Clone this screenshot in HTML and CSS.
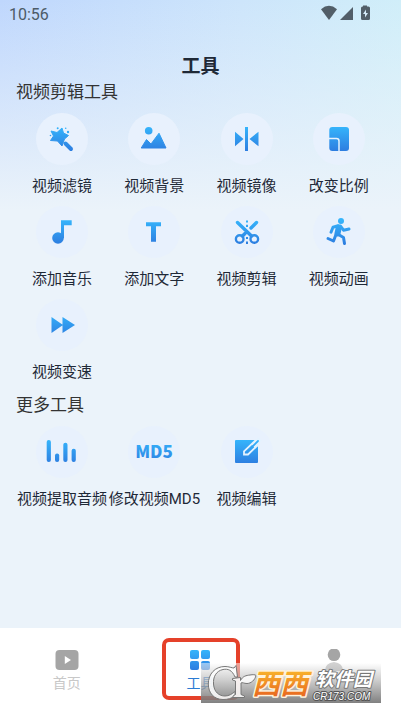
FILE: index.html
```html
<!DOCTYPE html>
<html lang="zh-CN">
<head>
<meta charset="utf-8">
<meta name="viewport" content="width=device-width, initial-scale=1">
<title>工具</title>
<link rel="stylesheet" href="styles.css">
</head>
<body>
<svg class="defs" aria-hidden="true">
  <defs>
    <linearGradient id="blue" gradientUnits="userSpaceOnUse" x1="0" y1="14" x2="0" y2="38">
      <stop offset="0" stop-color="#35b4fb"/><stop offset="1" stop-color="#2d7de0"/>
    </linearGradient>
    <linearGradient id="tab" gradientUnits="userSpaceOnUse" x1="0" y1="0" x2="0" y2="20">
      <stop offset="0" stop-color="#35b4fb"/><stop offset="1" stop-color="#2d7de0"/>
    </linearGradient>
    <linearGradient id="orange" x1="0" y1="0" x2="0" y2="1">
      <stop offset="0.2" stop-color="#f9b52c"/><stop offset="1" stop-color="#e4571c"/>
    </linearGradient>
  </defs>
</svg>

<header class="status">
  <time>10:56</time>
  <svg class="signals" viewBox="0 0 50 16" aria-hidden="true">
    <path d="M1 4.200Q9-2.600 17 4.200L9 15Z"/>
    <path d="M33 2V15H20Z"/>
    <path d="M43 1.500V.5H47V1.500H48.500Q50 1.500 50 3V13.500Q50 15 48.500 15H42.500Q41 15 41 13.500V3Q41 1.500 42.500 1.500Z"/>
    <path class="bolt" d="M46 4.500L43 9H45V12.500L48 8H46Z"/>
  </svg>
</header>

<main>
  <h1>工具</h1>
  <section>
    <h2>视频剪辑工具</h2>
    <div class="grid">
      <button class="tool"><svg viewBox="0 0 52 52" aria-hidden="true">
        <path class="round" stroke-width="1" d="M26 15L27.500 20L32.500 22.500L28.500 26L26 33L21.500 28L14.500 27.500L17.500 23L15 18L21 19.500Z"/>
        <path class="line" stroke-width="4" d="M29.500 30.500L35 36"/>
        <circle cx="21.700" cy="15.300" r="1"/><circle cx="32" cy="19" r="1.200"/><circle cx="29.700" cy="15.300" r=".8"/><circle cx="14.500" cy="22.500" r=".8"/>
      </svg><span>视频滤镜</span></button>
      <button class="tool"><svg viewBox="0 0 52 52" aria-hidden="true">
        <circle cx="20.700" cy="17.700" r="3.800"/>
        <path class="round" stroke-width="1" d="M13.200 35L18.500 26.500L23 31L31 20.200L38 35Z"/>
      </svg><span>视频背景</span></button>
      <button class="tool"><svg viewBox="0 0 52 52" aria-hidden="true">
        <path d="M24 14H27V38H24ZM14 18.700L22.500 26L14 33.300ZM37.500 18.700L28.500 26L37.500 33.300Z"/>
      </svg><span>视频镜像</span></button>
      <button class="tool"><svg viewBox="0 0 52 52" aria-hidden="true">
        <rect x="16.300" y="14" width="19.700" height="24" rx="3"/>
        <path class="cut" stroke-width="1.500" d="M16 25.500H23.500Q26 25.500 26 28V38"/>
      </svg><span>改变比例</span></button>
      <button class="tool"><svg viewBox="0 0 52 52" aria-hidden="true">
        <circle cx="22" cy="32" r="5.800"/><path d="M25 14.300H35.700V19.300H28V32H25Z"/>
      </svg><span>添加音乐</span></button>
      <button class="tool"><svg viewBox="0 0 52 52" aria-hidden="true">
        <path d="M18 16.300H33V20.300H28V35.700H23V20.300H18Z"/>
      </svg><span>添加文字</span></button>
      <button class="tool"><svg viewBox="0 0 52 52" aria-hidden="true">
        <g class="line"><circle cx="18.700" cy="33" r="3.800" stroke-width="2.400"/><circle cx="33.300" cy="33" r="3.800" stroke-width="2.400"/></g>
        <path class="line" stroke-width="3.400" d="M16.500 16.500L30.500 30M35.500 16.500L30 22M24 27.500L21.500 30"/>
        <path d="M25 14.500H27V16.500H25ZM25 18.700H27V21H25ZM25 31H27V33H25ZM25 35.500H27V38H25Z"/>
      </svg><span>视频剪辑</span></button>
      <button class="tool"><svg viewBox="0 0 52 52" aria-hidden="true">
        <circle cx="28" cy="15" r="3"/>
        <path class="line" stroke-width="6" d="M25.800 21.500L24.500 27.500"/>
        <path class="line" stroke-width="3" d="M25 19.800L20 21.200L18 26.200M27.500 20L30.500 24.200L36 23M24.500 28L30.500 31.500L31.500 37.500M23 28.500L20.500 35L15 32.500"/>
      </svg><span>视频动画</span></button>
      <button class="tool"><svg viewBox="0 0 52 52" aria-hidden="true">
        <path d="M15.500 18L27 26L15.500 34ZM26.500 18L39 26L26.500 34Z"/>
      </svg><span>视频变速</span></button>
    </div>
  </section>
  <section>
    <h2>更多工具</h2>
    <div class="grid">
      <button class="tool"><svg viewBox="0 0 52 52" aria-hidden="true">
        <rect x="10.700" y="14" width="4.200" height="22" rx="2"/><rect x="19" y="27.500" width="4.200" height="8.500" rx="2"/><rect x="27.300" y="16.700" width="4.200" height="19.300" rx="2"/><rect x="35.600" y="22.700" width="4.200" height="13.300" rx="2"/>
      </svg><span>视频提取音频</span></button>
      <button class="tool"><svg viewBox="0 0 52 52" aria-hidden="true">
        <text class="md5" x="26" y="32" text-anchor="middle">MD5</text>
      </svg><span>修改视频MD5</span></button>
      <button class="tool"><svg viewBox="0 0 52 52" aria-hidden="true">
        <rect x="14" y="14" width="23" height="23" rx="1"/>
        <path class="cut" stroke-width="4.600" d="M32 20L39 13"/>
        <path class="cut" stroke-width="1.800" d="M35 14L23 25.300V28.500H27L38 18"/>
        <path class="line" stroke-width="1.800" d="M29 23L37 15"/>
      </svg><span>视频编辑</span></button>
    </div>
  </section>
</main>

<nav>
  <a href="#home"><svg viewBox="0 0 24 22" aria-hidden="true"><rect x=".5" y="1" width="23" height="20" rx="4"/><path class="play" d="M9.800 7L16 11L9.800 15Z"/></svg><span>首页</span></a>
  <a href="#tools" class="active" aria-current="page"><svg viewBox="-2 -1 24 22" aria-hidden="true"><rect x="0" y="0" width="9" height="9" rx="2"/><rect x="11" y="0" width="9" height="9" rx="2"/><rect x="0" y="11" width="9" height="9" rx="2"/><rect x="11" y="11" width="9" height="9" rx="2"/></svg><span>工具</span></a>
  <a href="#me" aria-label="我的"><svg viewBox="0 0 24 22" aria-hidden="true"><circle cx="12" cy="5.700" r="6.300"/><path d="M3 22Q3 13.500 12 13.500Q21 13.500 21 22Z"/></svg></a>
  <div class="marker"></div>
  <svg class="watermark" viewBox="0 0 180 40" role="img" aria-label="西西软件园 CR173.COM">
    <g class="cr">
      <path d="M35 2.500L36.500 14H34C31 7 27 5.500 22 6.500C15 8 12 14 12.500 21C13 29 18 33 24 33C28 33 31 31 34 28.500V33C30 35.500 27 36.500 22 36.500C13 36.500 7.300 30 7.300 21C7.300 11 14 3.500 24 3.500C28 3.500 31 5 33 5Z"/>
      <path d="M31.500 15.500L39.500 14.500V17.500C42 13 45 12.500 49 12C52 11.500 54 11.500 55 12.500C54 17 50 20.500 46 20.500C43 20.500 41 19 40 20V31.500L43.500 33V34.500H32V33L34.500 31.500V18L31.500 17Z"/>
    </g>
    <text class="xixi" x="51" y="31">西西</text>
    <text class="soft" x="114" y="23">软件园</text>
    <text class="domain" x="112" y="37">CR173.COM</text>
  </svg>
</nav>
</body>
</html>
```
FILE: styles.css
```css
* {
  box-sizing: border-box;
}

body {
  margin: 0;
  min-height: 100vh;
  display: flex;
  flex-direction: column;
  font-family: Roboto, "Noto Sans CJK SC", sans-serif;
  color: #1f2937;
  background:
    linear-gradient(to bottom, rgba(235, 243, 250, 0), #ebf3fa 210px),
    linear-gradient(to right, #bfd7fd, #cde5fb 60%, #d0eef9);
}

.defs {
  position: absolute;
  width: 0;
  height: 0;
}

.status {
  display: flex;
  justify-content: space-between;
  align-items: center;
  height: 28px;
  padding: 0 31px 0 9px;
  font-size: 16px;
  color: #4d5b67;
}

.signals {
  width: 50px;
  height: 16px;
  margin-bottom: 3px;
  fill: #525e68;
}

.signals .bolt {
  fill: #d5eaf8;
}

main {
  flex: 1;
  padding: 27px 16px 0;
}

h1 {
  margin: 0;
  font-size: 19px;
  line-height: 24px;
  text-align: center;
}

h2 {
  margin: 0 0 8px;
  font-size: 17px;
  line-height: 26px;
  font-weight: 400;
  color: #333;
}

.grid {
  display: grid;
  grid-template-columns: repeat(4, 1fr);
}

.tool {
  display: flex;
  flex-direction: column;
  align-items: center;
  gap: 11px;
  min-width: 0;
  padding: 0 0 10px;
  border: 0;
  background: none;
  font: inherit;
  font-size: 15px;
  line-height: 20px;
  white-space: nowrap;
  color: #1f2937;
}

.tool svg {
  width: 52px;
  height: 52px;
  border-radius: 50%;
  background: #e8f1fd;
  fill: url(#blue);
}

.tool .line {
  fill: none;
  stroke: url(#blue);
  stroke-linecap: round;
  stroke-linejoin: round;
}

.tool .round {
  stroke: url(#blue);
  stroke-linejoin: round;
}

.tool .cut {
  fill: none;
  stroke: #e4f2fe;
}

.md5 {
  font-family: "Noto Sans CJK SC", sans-serif;
  font-size: 17px;
  font-weight: 900;
}

nav {
  position: relative;
  display: grid;
  grid-template-columns: repeat(3, 1fr);
  height: 85px;
  padding-top: 21px;
  background: #fff;
}

nav a {
  display: flex;
  flex-direction: column;
  align-items: center;
  gap: 2px;
  font-size: 14px;
  line-height: 20px;
  text-decoration: none;
  color: #c8c8c8;
}

nav a svg {
  width: 24px;
  height: 22px;
  fill: #a5a5a5;
}

nav .play {
  fill: #fff;
}

nav .active {
  color: #2b7bd3;
}

nav .active svg {
  fill: url(#tab);
}

.marker {
  position: absolute;
  top: 10px;
  left: calc(50% - 39px);
  width: 78px;
  height: 62px;
  border: 4px solid #e5412a;
  border-radius: 7px;
}

.watermark {
  position: absolute;
  right: 20px;
  bottom: 10px;
  width: 180px;
  height: 40px;
  overflow: visible;
  background: linear-gradient(to bottom, rgba(255, 255, 255, 0.5), rgba(190, 190, 190, 0.7) 40%, rgba(115, 115, 115, 0.9));
}

.cr {
  fill: rgba(255, 255, 255, 0.85);
  stroke: #777;
  stroke-width: 1;
}

.watermark text {
  font-family: "Noto Sans CJK SC", sans-serif;
  font-weight: 700;
  font-style: italic;
  paint-order: stroke;
  stroke-linejoin: round;
}

.xixi {
  font-size: 28px;
  fill: url(#orange);
  stroke: #fff3dc;
  stroke-width: 3;
}

.watermark .soft {
  font-size: 19px;
  fill: #fff;
  stroke: #777;
  stroke-width: 2;
}

.watermark .domain {
  font-family: "Liberation Sans", sans-serif;
  font-size: 10px;
  font-weight: 400;
  fill: #fff;
  stroke: #555;
  stroke-width: 2;
}
```
